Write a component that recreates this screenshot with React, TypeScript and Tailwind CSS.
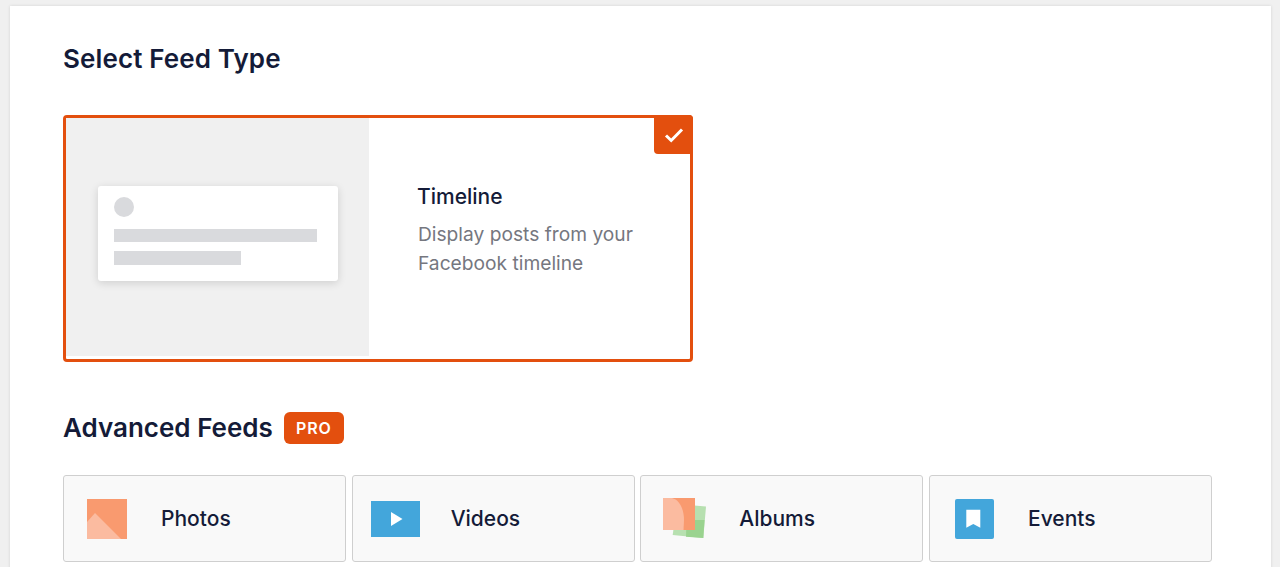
const font = { fontFamily: 'Inter, sans-serif' };

const PhotosIcon = () => (
  <svg width="40" height="40" viewBox="0 0 40 40">
    <rect width="40" height="40" fill="#f99a6f" />
    <path d="M0 23 L8 14 L34 40 L0 40 Z" fill="#fbbba0" />
  </svg>
);

const VideosIcon = () => (
  <svg width="49" height="36" viewBox="0 0 49 36">
    <rect width="49" height="36" fill="#43a6db" />
    <path d="M20 11 L31.5 18 L20 25 Z" fill="#fff" />
  </svg>
);

const AlbumsIcon = () => (
  <svg width="44" height="41" viewBox="0 0 44 41">
    <path d="M14 6 L43 8.6 L40.3 40 L9.7 37 Z" fill="#b7e0b0" />
    <path d="M23.5 22 L41.5 22 L40.3 40 L23 38.7 Z" fill="#9ad38f" />
    <rect width="32" height="32" fill="#f99a6f" />
    <path d="M0 0 H9 C17 2 21 12 21 22 L20.5 32 H0 Z" fill="#fbbba0" />
  </svg>
);

const EventsIcon = () => (
  <svg width="39" height="40" viewBox="0 0 39 40">
    <rect width="39" height="40" rx="2" fill="#43a6db" />
    <path d="M11.3 10.7 H25.3 V28.7 L18.3 25 L11.3 28.7 Z" fill="#fff" />
  </svg>
);

const feeds = [
  { name: 'Photos', icon: <PhotosIcon />, iconBox: 'w-[80px] pl-[23px]' },
  { name: 'Videos', icon: <VideosIcon />, iconBox: 'w-[81px] pl-[18px]' },
  { name: 'Albums', icon: <AlbumsIcon />, iconBox: 'w-[81px] pl-[22px]' },
  { name: 'Events', icon: <EventsIcon />, iconBox: 'w-[81px] pl-[25px]' },
];

export default function App() {
  return (
    <div className="h-[567px] overflow-hidden bg-[#f0f0f0] px-[10px] pt-[6px]" style={font}>
      <div className="h-[600px] w-[1261px] bg-white pl-[53px] pr-[59px] pt-[36px] shadow-[0_0_3px_rgba(0,0,0,0.12)]">
        <h2 className="text-[26px] leading-[34px] font-semibold tracking-[0.12px] text-[#141b38]">Select Feed Type</h2>

        <div className="relative mt-[39px] flex h-[247px] w-[630px] rounded border-[3px] border-[#e34f0e]">
          <div className="flex h-[238px] w-[303px] items-start bg-[#f0f0f0] pl-[32px] pt-[68px]">
            <div className="h-[95px] w-[240px] rounded-[3px] bg-white px-[16px] pt-[11px] shadow-[0_2px_8px_rgba(0,0,0,0.14)]">
              <div className="h-[20px] w-[20px] rounded-full bg-[#d9dadd]" />
              <div className="mt-[12px] h-[13px] w-[203px] bg-[#d9dadd]" />
              <div className="mt-[9px] h-[14px] w-[127px] bg-[#d9dadd]" />
            </div>
          </div>
          <div className="pl-[49px] pt-[65px]">
            <div className="-ml-px text-[21px] leading-[28px] font-medium text-[#141b38]">Timeline</div>
            <p className="mt-[9px] w-[240px] text-[19.2px] leading-[29px] text-[#75777f]">
              Display posts from your Facebook timeline
            </p>
          </div>
          <div className="absolute -right-[3px] -top-[3px] flex h-[39px] w-[39px] items-center justify-center rounded-tr rounded-bl bg-[#e34f0e]">
            <svg width="20" height="16" viewBox="0 0 20 16" fill="none">
              <path d="M2 8.5 L7.2 13.5 L18 2.5" stroke="#fff" strokeWidth="3" />
            </svg>
          </div>
        </div>

        <div className="mt-[50px] flex items-center">
          <h2 className="text-[26px] leading-[32px] font-semibold text-[#141b38]">Advanced Feeds</h2>
          <span className="ml-[11px] flex h-[32px] w-[60px] items-center justify-center rounded-md bg-[#e34f0e] text-[16px] font-semibold tracking-[0.05em] text-white">
            PRO
          </span>
        </div>

        <div className="mt-[31px] grid w-[1149px] grid-cols-4 gap-[5.67px]">
          {feeds.map((feed) => (
            <div
              key={feed.name}
              className="flex h-[87px] items-center rounded-[3px] border border-[#cfcfcf] bg-[#f9f9f9]"
            >
              <div className={`${feed.iconBox} shrink-0`}>{feed.icon}</div>
              <span className="pl-[17px] text-[21px] font-medium text-[#141b38]">{feed.name}</span>
            </div>
          ))}
        </div>
      </div>
    </div>
  );
}
